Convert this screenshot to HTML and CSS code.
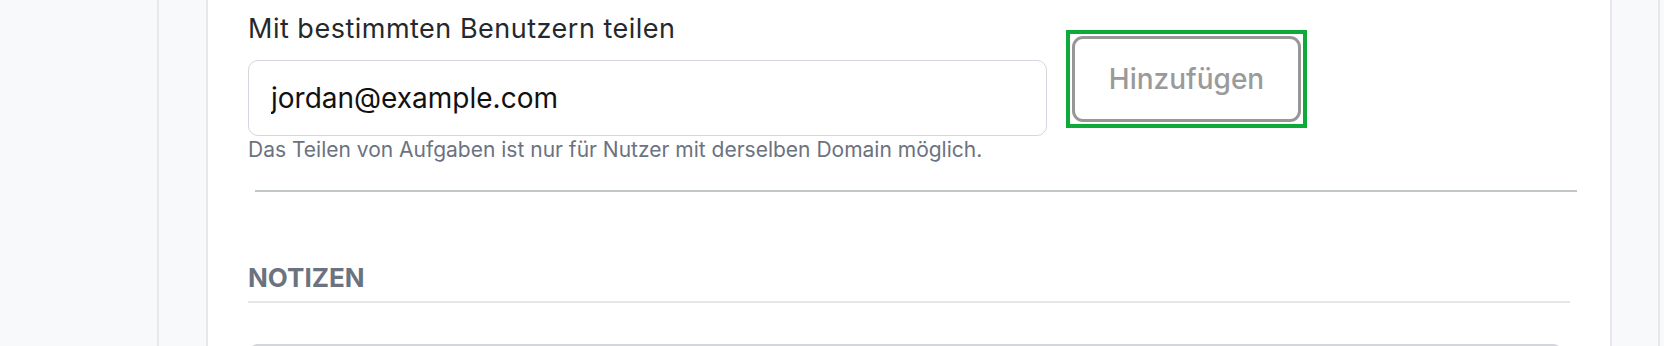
FILE: index.html
```html
<!DOCTYPE html>
<html lang="de">
<head>
  <meta charset="UTF-8" />
  <title>Aufgabe teilen</title>
  <link rel="stylesheet" href="styles.css">
</head>
<body>
  <div class="sidebar"></div>
  <div class="main">
    <div class="card">
      <div class="share">
        <label class="share-label" for="share-email">Mit bestimmten Benutzern teilen</label>
        <div class="share-row">
          <div class="share-field">
            <input id="share-email" class="share-input" type="email" value="jordan@example.com">
            <div class="share-help">Das Teilen von Aufgaben ist nur für Nutzer mit derselben Domain möglich.</div>
          </div>
          <div class="focus-ring">
            <button class="btn-add" disabled>Hinzufügen</button>
          </div>
        </div>
      </div>

      <hr class="divider">

      <div class="notes">
        <h2 class="section-title">NOTIZEN</h2>
        <div class="notes-box"></div>
      </div>
    </div>
  </div>
  <div class="rail"></div>
</body>
</html>
```

FILE: styles.css
```css
html, body {
  margin: 0;
  height: 346px;
  overflow: hidden;
}
body {
  display: flex;
  background: #f8f9fb;
  font-family: Inter, "Noto Sans", sans-serif;
  color: #222529;
}
.sidebar {
  width: 157px;
  border-right: 2px solid #e6e8ec;
  flex: none;
}
.main {
  flex: none;
  padding: 0 46px 0 47px;
}
.card {
  width: 1406px;
  height: 346px;
  box-sizing: border-box;
  background: #fff;
  border-left: 2px solid #e6e8ec;
  border-right: 2px solid #e6e8ec;
  padding: 0 40px;
}
.rail {
  flex: 1;
  border-left: 2px solid #e6e8ec;
}

/* share with users */
.share {
  padding-top: 14px;
}
.share-label {
  display: block;
  font-size: 27px;
  line-height: 30px;
  letter-spacing: 0.5px;
  color: #25282c;
}
.share-row {
  display: flex;
  align-items: flex-start;
  gap: 19px;
}
.share-field {
  width: 799px;
  margin-top: 16px;
}
.share-input {
  display: block;
  width: 100%;
  height: 76px;
  box-sizing: border-box;
  border: 1.5px solid #d3d6dc;
  border-radius: 10px;
  padding: 0 22px;
  font-family: Inter, "Noto Sans", sans-serif;
  font-size: 28px;
  color: #111;
  background: #fff;
  outline: none;
}
.share-help {
  margin-top: 2px;
  font-size: 21px;
  line-height: 24px;
  color: #6b7280;
}
.focus-ring {
  border: 4px solid #0daa3a;
  padding: 2px;
  margin-top: -14px;
}
.btn-add {
  display: block;
  width: 229px;
  height: 86px;
  border: 3px solid #979797;
  border-radius: 11px;
  background: #fff;
  color: #9a9a9a;
  font-family: Inter, "Noto Sans", sans-serif;
  font-size: 28px;
  font-weight: 500;
  cursor: not-allowed;
}

.divider {
  margin: 28px -7px 0 7px;
  border: none;
  border-top: 2px solid #c0c5c5;
}

/* notes */
.section-title {
  margin: 71px 0 0 0;
  font-size: 26px;
  line-height: 30px;
  font-weight: 700;
  color: #6b7280;
  padding-bottom: 8px;
  border-bottom: 2px solid #e5e7eb;
}
.notes-box {
  margin: 41px 7px 0 0;
  height: 80px;
  border: 2px solid #d3d6dc;
  border-radius: 10px;
}
```
